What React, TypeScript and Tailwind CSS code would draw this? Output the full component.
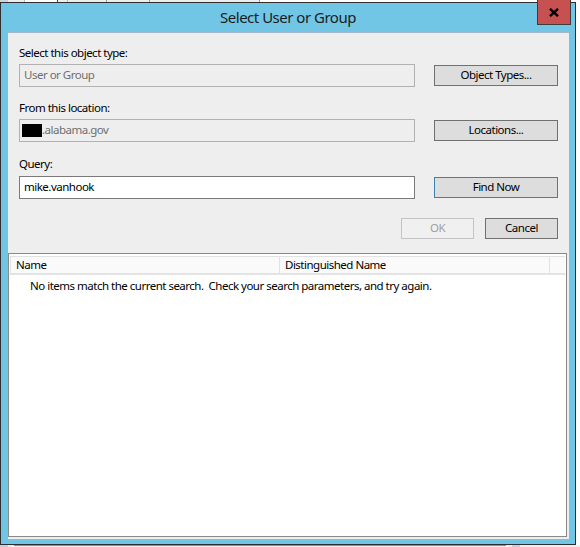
import React from "react";

const font = { fontFamily: '"Noto Sans", "Open Sans", Arial, sans-serif' };

function Btn({ children, variant = "normal", width = "w-[124px]" }: { children: React.ReactNode; variant?: "normal" | "focus" | "disabled"; width?: string }) {
  const cls =
    variant === "focus"
      ? "border-[#3c7fb1] bg-[#dddddd] text-[#000000]"
      : variant === "disabled"
      ? "border-[#c4c4c4] bg-[#f0f0f0] text-[#a0a0a0]"
      : "border-[#707070] bg-[#dddddd] text-[#000000]";
  return (
    <div className={`${width} h-[21px] shrink-0 border ${cls} flex items-center justify-center pb-[1px] leading-none`}>
      {children}
    </div>
  );
}

export default function App() {
  return (
    <div className="w-[580px] h-[547px] bg-[#f3f3f3] relative overflow-hidden text-black text-[11.5px] tracking-[-0.5px]" style={font}>
      {/* desktop strip behind window */}
      <div className="h-[2px] flex bg-[#eeeeee]">
        <div className="w-[8px] bg-[#c9d5e0]" />
        <div className="w-[17px] border-r border-[#bbbbbb]" />
        <div className="w-[33px] bg-white border-r border-[#3b3bb0]" />
        <div className="w-[10px] border-r border-[#bbbbbb]" />
        <div className="w-[39px] border-r border-[#9a9a9a]" />
        <div className="w-[43px] border-r border-[#9a9a9a]" />
        <div className="w-[110px] border-r border-[#9a9a9a]" />
        <div className="flex-1 bg-white" />
      </div>

      <div className="flex">
        {/* window */}
        <div className="w-[576px] h-[543px] border border-[#2e2e2e] bg-[#71c6e5] flex flex-col">
          {/* title bar */}
          <div className="h-[29px] flex items-center justify-center">
            <span className="text-[15px] tracking-[-0.5px] text-[#1c1c1c] leading-none mt-[-1px]">Select User or Group</span>
          </div>

          {/* client area */}
          <div className="ml-[7px] mr-[6px] h-[507px] bg-[#eeeeee] border-t border-[#a7b7c7] flex flex-col">
            <div className="pl-[11px] pr-[10px]">
              <div className="mt-[12px] h-[15px] leading-[15px]">Select this object type:</div>
              <div className="mt-[4px] flex items-center gap-[19px]">
                <div className="w-[396px] h-[23px] border border-[#b2b2b2] bg-[#eeeeee] flex items-center pl-[4px] pb-[1px] text-[#6f6f6f]">
                  User or Group
                </div>
                <Btn>Object Types...</Btn>
              </div>

              <div className="mt-[13px] h-[15px] leading-[15px]">From this location:</div>
              <div className="mt-[4px] flex items-center gap-[19px]">
                <div className="w-[396px] h-[23px] border border-[#b2b2b2] bg-[#eeeeee] flex items-center pl-[2px] text-[#6f6f6f]">
                  <span className="w-[20px] h-[13px] bg-black inline-block" />
                  <span className="mb-[1px]">.alabama.gov</span>
                </div>
                <Btn>Locations...</Btn>
              </div>

              <div className="mt-[14px] h-[15px] leading-[15px]">Query:</div>
              <div className="mt-[5px] flex items-center gap-[19px]">
                <div className="w-[396px] h-[23px] border border-[#7a7a7a] bg-white flex items-center pl-[4px] pb-[1px] text-black">
                  mike.vanhook
                </div>
                <Btn variant="focus">Find Now</Btn>
              </div>

              <div className="mt-[19px] flex justify-end gap-[11px] pr-[1px]">
                <Btn variant="disabled" width="w-[73px]">OK</Btn>
                <Btn width="w-[73px]">Cancel</Btn>
              </div>
            </div>

            {/* list */}
            <div className="mt-[14px] w-[559px] h-[284px] border border-[#8a8a8a] bg-white flex flex-col">
              <div className="mt-[2px] mx-[1px] h-[18px] flex bg-[#fafafa] border-y border-[#e2e2e2] leading-none">
                <div className="w-[270px] border-l border-r border-[#e2e2e2] flex items-center pl-[5px] pb-[1px]">Name</div>
                <div className="w-[270px] border-r border-[#e2e2e2] flex items-center pl-[5px] pb-[1px]">Distinguished Name</div>
                <div className="flex-1" />
              </div>
              <div className="h-[1px] bg-[#e4e4e4]" />
              <div className="mt-[3px] pl-[21px] leading-[15px] whitespace-pre">
                {"No items match the current search.  Check your search parameters, and try again."}
              </div>
            </div>
          </div>
        </div>
        <div className="flex-1 bg-white" />
      </div>

      {/* bottom desktop strip */}
      <div className="h-[2px] flex bg-[#eeeeee]">
        <div className="w-[8px] bg-[#c4d0dc]" />
        <div className="w-[6px]" />
        <div className="w-[492px] border-t border-[#8e8e8e]" />
        <div className="w-[6px]" />
        <div className="w-[8px] bg-[#c4d0dc]" />
        <div className="flex-1" />
      </div>

      {/* close button */}
      <div className="absolute left-[537px] top-0 w-[34px] h-[25px] bg-[#c75050] border border-[#3c3c3c] border-t-0 flex items-center justify-center">
        <svg width="10" height="9" viewBox="0 0 10 9">
          <path d="M1 0.8 L9 8.2 M9 0.8 L1 8.2" stroke="#000" strokeWidth="2.4" strokeLinecap="butt" />
        </svg>
      </div>
    </div>
  );
}
